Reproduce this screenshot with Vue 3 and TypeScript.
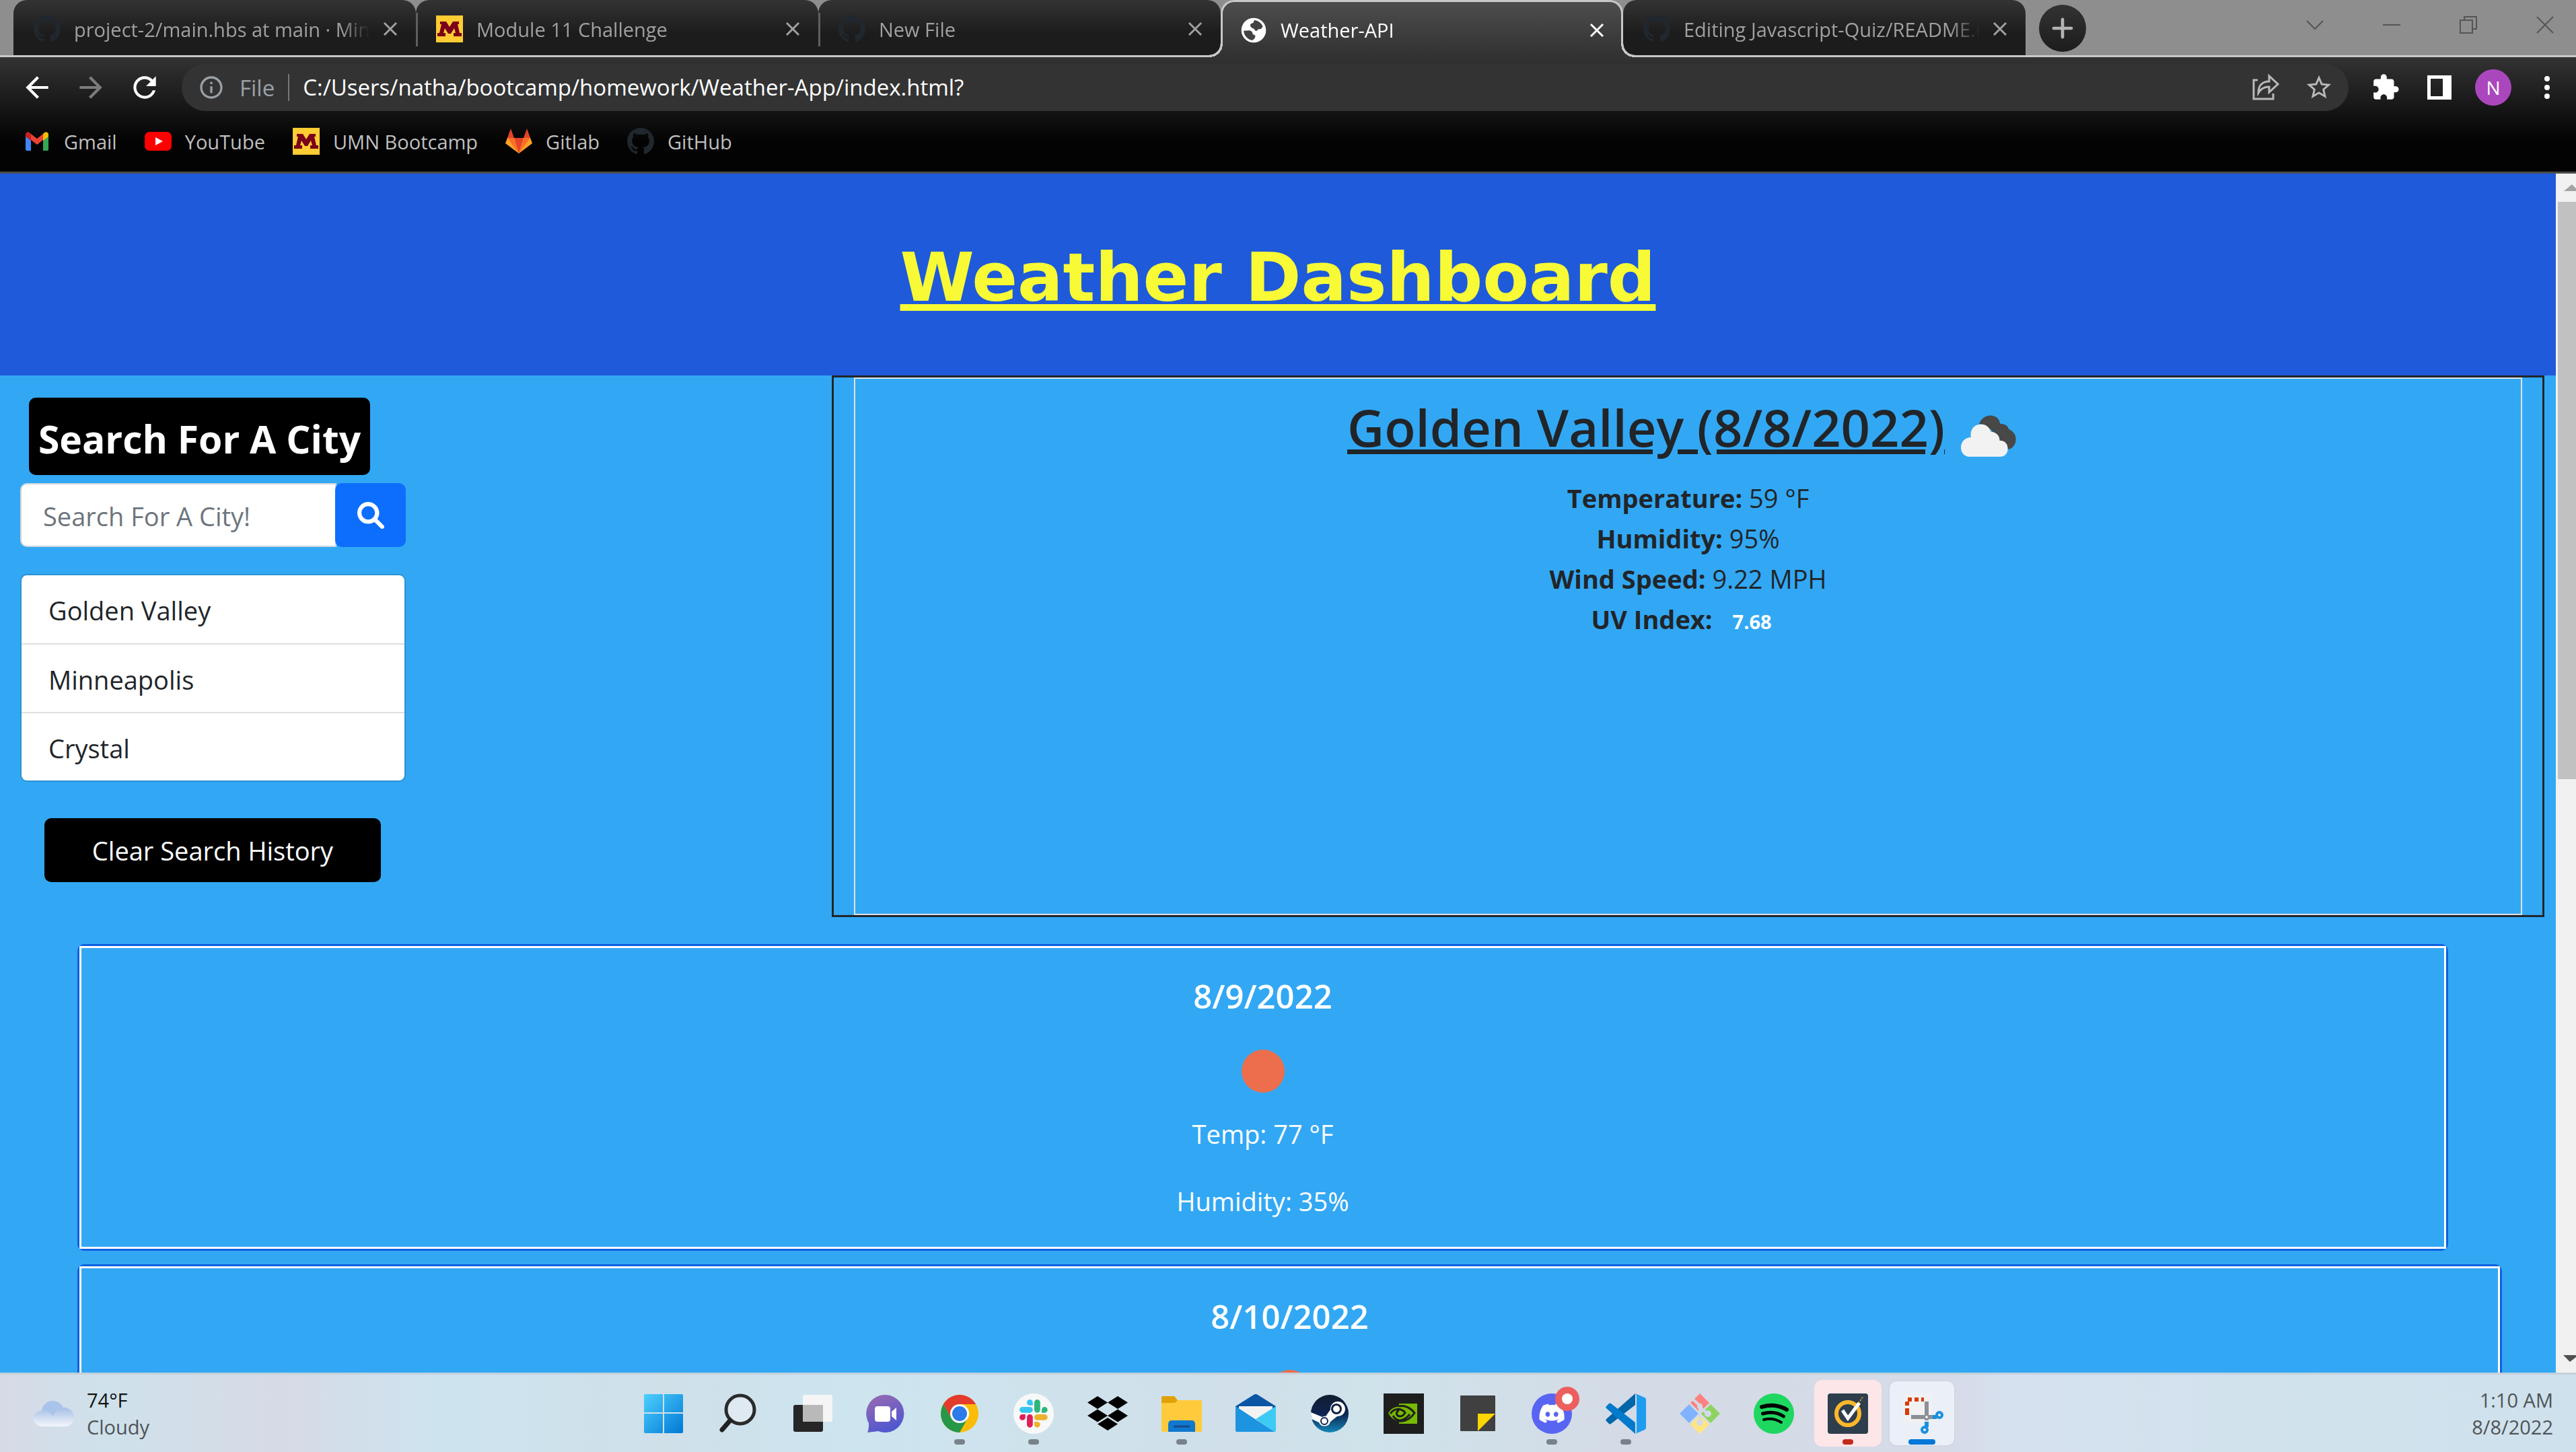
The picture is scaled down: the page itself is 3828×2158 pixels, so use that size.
<script setup lang="ts">
import { ref } from 'vue'

interface Tab {
  title: string
  icon: 'github' | 'umn' | 'globe'
  active?: boolean
}
interface TaskItem {
  name: string
  state?: 'open' | 'alert' | 'current'
}
interface Day {
  date: string
  details: string[]
}

const tabs: Tab[] = [
  { title: 'project-2/main.hbs at main · Minn', icon: 'github' },
  { title: 'Module 11 Challenge', icon: 'umn' },
  { title: 'New File', icon: 'github' },
  { title: 'Weather-API', icon: 'globe', active: true },
  { title: 'Editing Javascript-Quiz/README.m', icon: 'github' },
]

const bookmarks = ['Gmail', 'YouTube', 'UMN Bootcamp', 'Gitlab', 'GitHub']

const query = ref('')
const history = ref<string[]>(['Golden Valley', 'Minneapolis', 'Crystal'])

const current = [
  { label: 'Temperature:', value: '59 °F' },
  { label: 'Humidity:', value: '95%' },
  { label: 'Wind Speed:', value: '9.22 MPH' },
]

const forecast: Day[] = [
  { date: '8/9/2022', details: ['Temp: 77 °F', 'Humidity: 35%'] },
  { date: '8/10/2022', details: [] },
]

const tasks: TaskItem[] = [
  { name: 'start' },
  { name: 'search' },
  { name: 'taskview' },
  { name: 'chat' },
  { name: 'chrome', state: 'open' },
  { name: 'slack', state: 'open' },
  { name: 'dropbox' },
  { name: 'explorer', state: 'open' },
  { name: 'mail' },
  { name: 'steam' },
  { name: 'nvidia' },
  { name: 'notes' },
  { name: 'discord', state: 'open' },
  { name: 'vscode', state: 'open' },
  { name: 'git' },
  { name: 'spotify' },
  { name: 'norton', state: 'alert' },
  { name: 'snip', state: 'current' },
]

const octocat =
  'M8 0C3.58 0 0 3.58 0 8c0 3.54 2.29 6.53 5.47 7.59.4.07.55-.17.55-.38 0-.19-.01-.82-.01-1.49-2.01.37-2.53-.49-2.69-.94-.09-.23-.48-.94-.82-1.13-.28-.15-.68-.52-.01-.53.63-.01 1.08.58 1.23.82.72 1.21 1.87.87 2.33.66.07-.52.28-.87.51-1.07-1.78-.2-3.64-.89-3.64-3.95 0-.87.31-1.59.82-2.15-.08-.2-.36-1.02.08-2.12 0 0 .67-.21 2.2.82.64-.18 1.32-.27 2-.27.68 0 1.36.09 2 .27 1.53-1.04 2.2-.82 2.2-.82.44 1.1.16 1.92.08 2.12.51.56.82 1.27.82 2.15 0 3.07-1.87 3.75-3.65 3.95.29.25.54.73.54 1.48 0 1.07-.01 1.93-.01 2.2 0 .21.15.46.55.38A8.013 8.013 0 0016 8c0-4.42-3.58-8-8-8z'
const blockM =
  'M6 9h9l5 8 5-8h9v4h-2l3 13h3v5H26v-5h3l-2-7-5 8h-4l-5-8-2 7h3v5H2v-5h3l3-13H6z'
</script>

<template>
  <div class="screen">
    <div class="browser">
      <div class="strip">
        <div class="tabs">
          <div v-for="tab in tabs" :key="tab.title" class="tab" :class="{ active: tab.active }">
            <svg v-if="tab.icon === 'github'" class="fav" viewBox="0 0 16 16"><path :d="octocat" fill="#20272e" /></svg>
            <svg v-else-if="tab.icon === 'umn'" class="fav" viewBox="0 0 40 40">
              <rect width="40" height="40" fill="#ffcc33" /><path :d="blockM" fill="#7a0019" />
            </svg>
            <svg v-else class="fav" viewBox="0 0 24 24">
              <circle cx="12" cy="12" r="11" fill="#fff" />
              <path fill="#434343" d="M11 20.900a9 9 0 0 1-7.900-8.500L8 12.200c2 .2 3 1.400 3 2.600 0 1.200 1.800.8 2.400 2 .4 1-.6 1.600-.6 2.600zM9 7.500c0-1.500 1.600-1.500 2.600-2.200.6-.6.4-1.600 1-2.300 3.400.3 6.300 2.500 7.500 5.500l-1.300 2.200c-1.200.5-2.800 0-3.500 1.300-.5 1-2.300.6-2.500-.6-.2-1.500-3.800-.9-3.800-3.900z" />
            </svg>
            <span class="tab-title">{{ tab.title }}</span>
            <button class="tab-close" type="button" aria-label="Close tab">
              <svg viewBox="0 0 20 20"><path d="M1 1l18 18M19 1L1 19" stroke="currentColor" stroke-width="3" /></svg>
            </button>
          </div>
        </div>
        <button class="new-tab" type="button" aria-label="New tab">
          <svg viewBox="0 0 30 30"><path d="M15 1v28M1 15h28" stroke="#b4b4b4" stroke-width="5" stroke-linecap="round" /></svg>
        </button>
        <div class="window-buttons">
          <button type="button" aria-label="Search tabs"><svg viewBox="0 0 26 26"><path d="M1 7l12 12L25 7" /></svg></button>
          <button type="button" aria-label="Minimize"><svg viewBox="0 0 26 26"><path d="M0 13h26" /></svg></button>
          <button type="button" aria-label="Restore"><svg viewBox="0 0 26 26"><path d="M1 6h18v19H1zM7 6V1h18v18h-6" /></svg></button>
          <button type="button" aria-label="Close"><svg viewBox="0 0 26 26"><path d="M1 1l24 24M25 1L1 25" /></svg></button>
        </div>
      </div>

      <div class="toolbar">
        <button class="tool" type="button" aria-label="Back">
          <svg viewBox="0 0 24 24"><path fill="#fff" d="M20 11H7.830l5.590-5.590L12 4l-8 8 8 8 1.410-1.410L7.830 13H20v-2z" /></svg>
        </button>
        <button class="tool" type="button" aria-label="Forward">
          <svg viewBox="0 0 24 24"><path fill="#7c7c7c" d="M4 13h12.170l-5.590 5.590L12 20l8-8-8-8-1.410 1.410L16.170 11H4v2z" /></svg>
        </button>
        <button class="tool" type="button" aria-label="Reload">
          <svg viewBox="0 0 24 24"><path fill="#fff" d="M17.650 6.350C16.200 4.900 14.210 4 12 4c-4.420 0-7.990 3.580-7.990 8s3.570 8 7.990 8c3.730 0 6.840-2.550 7.730-6h-2.080c-.82 2.330-3.040 4-5.650 4-3.310 0-6-2.690-6-6s2.690-6 6-6c1.660 0 3.140.69 4.220 1.780L13 11h7V4l-2.350 2.350z" /></svg>
        </button>
        <div class="omnibox">
          <svg class="info" viewBox="0 0 24 24"><path fill="#9aa0a6" d="M11 7h2v2h-2zm0 4h2v6h-2zm1-9C6.480 2 2 6.480 2 12s4.480 10 10 10 10-4.480 10-10S17.520 2 12 2zm0 18c-4.410 0-8-3.590-8-8s3.590-8 8-8 8 3.590 8 8-3.590 8-8 8z" /></svg>
          <span class="scheme">File</span>
          <span class="url">C:/Users/natha/bootcamp/homework/Weather-App/index.html?</span>
          <svg class="omni-icon" viewBox="0 0 40 40">
            <path fill="none" stroke="#b9b9b9" stroke-width="3" d="M8 9H2v28h29v-8M9 28c0-11 6-17 16-17V3l13 12-13 12v-8c-7 0-12 2-16 9z" />
          </svg>
          <svg class="omni-icon" viewBox="1 1 22 22"><path fill="#b9b9b9" d="M22 9.240l-7.190-.62L12 2 9.190 8.630 2 9.240l5.460 4.730L5.820 21 12 17.270 18.180 21l-1.630-7.030L22 9.240zM12 15.400l-3.760 2.270 1-4.280-3.320-2.880 4.380-.38L12 6.100l1.710 4.040 4.380.38-3.320 2.880 1 4.280L12 15.400z" /></svg>
        </div>
        <button class="tool" type="button" aria-label="Extensions">
          <svg viewBox="-2 -2 28 28"><path fill="#fff" d="M20.500 11H19V7c0-1.100-.9-2-2-2h-4V3.500C13 2.120 11.880 1 10.500 1S8 2.120 8 3.500V5H4c-1.100 0-1.990.9-1.990 2v3.800H3.500c1.490 0 2.700 1.210 2.700 2.700s-1.210 2.700-2.700 2.700H2V20c0 1.100.9 2 2 2h3.800v-1.500c0-1.490 1.210-2.700 2.700-2.700 1.490 0 2.700 1.210 2.700 2.700V22H17c1.100 0 2-.9 2-2v-4h1.500c1.380 0 2.500-1.120 2.500-2.500S21.880 11 20.500 11z" /></svg>
        </button>
        <button class="tool" type="button" aria-label="Side panel">
          <svg viewBox="0 0 50 50"><path fill="#fff" fill-rule="evenodd" d="M7 7h36v36H7zm5 5v26h18V12z" /></svg>
        </button>
        <button class="tool avatar" type="button">N</button>
        <button class="tool" type="button" aria-label="Menu">
          <svg viewBox="0 0 50 50"><g fill="#fff"><circle cx="25" cy="12" r="4" /><circle cx="25" cy="25" r="4" /><circle cx="25" cy="38" r="4" /></g></svg>
        </button>
      </div>

      <nav class="bookmarks">
        <a v-for="mark in bookmarks" :key="mark" href="#">
          <svg v-if="mark === 'Gmail'" viewBox="0 0 40 40">
            <path d="M3 34V12l8 6v16H5a2 2 0 0 1-2-2z" fill="#4285f4" /><path d="M37 34V12l-8 6v16h6a2 2 0 0 0 2-2z" fill="#34a853" />
            <path d="M11 18v-9l9 7 9-7v9l-9 7z" fill="#ea4335" /><path d="M3 10v3l8 6V9L9 7c-3-2-6 0-6 3z" fill="#c5221f" /><path d="M37 10v3l-8 6V9l2-2c3-2 6 0 6 3z" fill="#fbbc04" />
          </svg>
          <svg v-else-if="mark === 'YouTube'" viewBox="0 0 40 40"><rect y="6" width="40" height="28" rx="7" fill="#f00" /><path d="M16 14l11 6-11 6z" fill="#fff" /></svg>
          <svg v-else-if="mark === 'UMN Bootcamp'" viewBox="0 0 40 40"><rect width="40" height="40" fill="#ffcc33" /><path :d="blockM" fill="#7a0019" /></svg>
          <svg v-else-if="mark === 'Gitlab'" viewBox="0 0 40 40">
            <path d="M20 38L0 23l3-8h34l3 8z" fill="#fca326" /><path d="M3 15L8 1l5 14zM37 15L32 1l-5 14zM13 15h14l-7 23z" fill="#e24329" /><path d="M3 15h10l7 23zM37 15H27l-7 23z" fill="#fc6d26" />
          </svg>
          <svg v-else viewBox="0 0 16 16"><path :d="octocat" fill="#20272e" /></svg>
          <span>{{ mark }}</span>
        </a>
      </nav>
    </div>

    <div class="viewport">
      <div class="page">
        <header class="hero"><h1>Weather Dashboard</h1></header>

        <div class="columns">
          <aside class="side">
            <h3 class="side-title"><label for="city">Search For A City</label></h3>
            <form class="search" @submit.prevent>
              <input id="city" v-model="query" type="text" placeholder="Search For A City!" />
              <button type="submit" aria-label="Search">
                <svg viewBox="0 0 512 512"><path fill="#fff" d="M500.300 443.700l-119.700-119.700c27.220-40.410 40.650-90.900 33.460-144.700C401.800 87.790 326.800 13.320 235.200 1.723C99.010-15.510-15.510 99.010 1.724 235.200c11.600 91.640 86.080 166.700 177.600 178.900c53.800 7.189 104.300-6.236 144.700-33.460l119.700 119.700c15.620 15.620 40.950 15.620 56.570 0C515.900 484.700 515.900 459.300 500.300 443.700zM79.100 208c0-70.580 57.420-128 128-128s128 57.420 128 128c0 70.580-57.420 128-128 128S79.100 278.600 79.100 208z" /></svg>
              </button>
            </form>
            <ul class="history">
              <li v-for="city in history" :key="city">{{ city }}</li>
            </ul>
            <button class="clear" type="button" @click="history = []">Clear Search History</button>
          </aside>

          <section class="current">
            <div class="current-inner">
              <div class="current-head">
                <h2>Golden Valley (8/8/2022)</h2>
                <svg class="cloud" viewBox="0 0 125 125">
                  <path fill="#484849" d="M50 46c4-10 14-16 24-12 6 2 9 7 10 12 7 0 12 3 14 9 7 3 11 9 11 16 0 8-5 14-11 16L80 76 70 56z" />
                  <path fill="#f2f2f2" d="M36 99c-10 0-15-7-15-15 0-9 7-16 16-16-2-12 5-21 16-21 8 0 14 5 16 12 8 0 14 6 14 14 8 0 13 5 13 13 0 8-5 13-12 13z" />
                </svg>
              </div>
              <p v-for="row in current" :key="row.label"><strong>{{ row.label }}</strong> {{ row.value }}</p>
              <p><strong>UV Index:</strong> <span class="badge">7.68</span></p>
            </div>
          </section>
        </div>

        <section class="forecast">
          <article v-for="day in forecast" :key="day.date" class="card">
            <div class="card-body">
              <h5>{{ day.date }}</h5>
              <svg class="sun" viewBox="0 0 125 125"><circle cx="63" cy="62" r="32" fill="#ec6e4c" /></svg>
              <p v-for="line in day.details" :key="line">{{ line }}</p>
            </div>
          </article>
        </section>
      </div>

      <div class="scrollbar">
        <svg viewBox="0 0 30 42"><path d="M12 26h18v-4l-6-6z" fill="#a3a3a3" /></svg>
        <div class="thumb"></div>
        <svg viewBox="0 0 30 42"><path d="M11 16h19v3l-9 7z" fill="#505050" /></svg>
      </div>
    </div>

    <footer class="taskbar">
      <div class="weather">
        <svg viewBox="0 0 60 60">
          <defs>
            <linearGradient id="wc" x1="0" y1="0" x2="0" y2="1"><stop offset="0" stop-color="#a4bfe6" /><stop offset="1" stop-color="#f4f6fb" /></linearGradient>
          </defs>
          <path fill="#aac3ea" d="M12 26c1-9 8-15 16-15s15 5 17 13L34 44z" />
          <path fill="url(#wc)" d="M14 49C5 49 0 43 0 37s6-12 14-12c7 0 12 4 15 9 3-7 9-13 16-13 9 0 15 7 15 14s-5 14-13 14z" />
        </svg>
        <div><span class="deg">74°F</span><span>Cloudy</span></div>
      </div>

      <div class="tasks">
        <button v-for="t in tasks" :key="t.name" type="button" class="task" :class="t.state" :aria-label="t.name">
          <svg viewBox="0 0 60 60">
            <template v-if="t.name === 'start'">
              <defs><linearGradient id="win" x1="0" y1="0" x2="1" y2="1"><stop offset="0" stop-color="#4dd0ff" /><stop offset="1" stop-color="#0078d4" /></linearGradient></defs>
              <path fill="url(#win)" d="M3 1h26v27H1V3a2 2 0 0 1 2-2zM31 1h26a2 2 0 0 1 2 2v25H31zM1 30h28v29H3a2 2 0 0 1-2-2zM31 30h28v27a2 2 0 0 1-2 2H31z" />
            </template>
            <template v-else-if="t.name === 'search'">
              <circle cx="34" cy="24" r="21" fill="#dfe9f2" stroke="#2b2b2b" stroke-width="5" /><path d="M19 40L7 54" stroke="#222" stroke-width="7" stroke-linecap="round" />
            </template>
            <template v-else-if="t.name === 'taskview'">
              <rect x="3" y="17" width="44" height="40" rx="3" fill="#262626" /><rect x="17" y="2" width="44" height="40" rx="3" fill="#f5f5f5" /><rect x="17" y="17" width="30" height="25" fill="#b9b9b9" />
            </template>
            <template v-else-if="t.name === 'chat'">
              <defs><linearGradient id="chat" x1="0" y1="0" x2=".4" y2="1"><stop offset="0" stop-color="#9d6bb0" /><stop offset="1" stop-color="#5158cf" /></linearGradient></defs>
              <path fill="url(#chat)" d="M30 2a28 28 0 1 1-11 54L3 58c2-4 2-8 2-14A28 28 0 0 1 30 2z" /><rect x="14" y="19" width="23" height="23" rx="4" fill="#fff" /><path d="M39 27l7-6v19l-7-6z" fill="#fff" />
            </template>
            <template v-else-if="t.name === 'chrome'">
              <circle cx="30" cy="30" r="28" fill="#fbbc09" /><path fill="#e33b2e" d="M5.800 16A28 28 0 0 1 54.200 16H30L18 37z" /><path fill="#279847" d="M5.800 16A28 28 0 0 0 30 58l12-21-12 7-12-7z" />
              <circle cx="30" cy="30" r="14" fill="#fff" /><circle cx="30" cy="30" r="11" fill="#2c7be8" />
            </template>
            <template v-else-if="t.name === 'slack'">
              <circle cx="30" cy="30" r="30" fill="#f8f8f8" />
              <g transform="translate(9 9) scale(.34)">
                <path fill="#e01e5a" d="M25.800 77.600c0 7.100-5.800 12.900-12.900 12.900S0 84.700 0 77.600s5.800-12.900 12.900-12.900h12.900v12.900zm6.500 0c0-7.100 5.800-12.900 12.900-12.900s12.900 5.800 12.900 12.900v32.300c0 7.100-5.800 12.900-12.900 12.900s-12.900-5.800-12.900-12.900V77.600z" />
                <path fill="#36c5f0" d="M45.200 25.800c-7.100 0-12.900-5.800-12.900-12.900S38.100 0 45.200 0s12.900 5.800 12.900 12.900v12.900H45.200zm0 6.500c7.100 0 12.900 5.800 12.900 12.900s-5.800 12.900-12.900 12.900H12.900C5.800 58.100 0 52.300 0 45.200s5.800-12.900 12.900-12.900h32.300z" />
                <path fill="#2eb67d" d="M97 45.200c0-7.100 5.800-12.900 12.900-12.900s12.900 5.800 12.900 12.900-5.800 12.900-12.900 12.900H97V45.200zm-6.500 0c0 7.100-5.800 12.900-12.900 12.900s-12.900-5.800-12.900-12.900V12.900C64.700 5.800 70.500 0 77.600 0s12.900 5.800 12.900 12.900v32.300z" />
                <path fill="#ecb22e" d="M77.600 97c7.100 0 12.900 5.800 12.900 12.900s-5.800 12.900-12.900 12.900-12.900-5.800-12.900-12.900V97h12.900zm0-6.500c-7.100 0-12.900-5.800-12.900-12.900s5.800-12.900 12.900-12.900h32.300c7.100 0 12.900 5.800 12.900 12.900s-5.800 12.900-12.900 12.900H77.600z" />
              </g>
            </template>
            <path v-else-if="t.name === 'dropbox'" d="M15 4L0 13.500 15 23l15-9.500zM45 4L30 13.500 45 23l15-9.500zM0 33l15 9.500L30 33l-15-9.500zM45 23.500L30 33l15 9.500L60 33zM15 45.500L30 55l15-9.500L30 36z" />
            <template v-else-if="t.name === 'explorer'">
              <path d="M0 6a2 2 0 0 1 2-2h17l5 6v10H0z" fill="#e0a106" /><path d="M0 14h20l4-4h34a2 2 0 0 1 2 2v43a2 2 0 0 1-2 2H2a2 2 0 0 1-2-2z" fill="#ffcb3c" />
              <path d="M10 57V45a5 5 0 0 1 5-5h30a5 5 0 0 1 5 5v12z" fill="#0f78cf" /><path d="M18 49h24" stroke="#164a8a" stroke-width="3" />
            </template>
            <template v-else-if="t.name === 'mail'">
              <path d="M0 19L27 2q3-2 6 0l27 17v10H0z" fill="#0b55a5" /><path d="M5 19h50v12L30 42 5 31z" fill="#f3f3f3" />
              <path d="M60 19v36a2 2 0 0 1-2 2L30 38z" fill="#3dcaf5" /><path d="M0 19l58 38H2a2 2 0 0 1-2-2z" fill="#1c94e0" />
            </template>
            <template v-else-if="t.name === 'steam'">
              <defs><linearGradient id="steam" x1="0" y1="0" x2="0" y2="1"><stop offset="0" stop-color="#111d2e" /><stop offset=".5" stop-color="#0f2350" /><stop offset="1" stop-color="#1387b8" /></linearGradient></defs>
              <circle cx="30" cy="30" r="28" fill="url(#steam)" />
              <path d="M2 28l17 7q3-2 5-1l7-10a11 11 0 1 1 10 10l-10 8a9 9 0 0 1-17 1L3 38q-1-5-1-10z" fill="#fff" />
              <circle cx="40" cy="23" r="8" fill="#14224a" /><circle cx="40" cy="23" r="5" fill="#fff" /><circle cx="22" cy="41" r="5" fill="#fff" stroke="#14224a" stroke-width="2" />
            </template>
            <template v-else-if="t.name === 'nvidia'">
              <rect width="60" height="60" fill="#1e1e1e" /><path d="M23 15h27v30H23z" fill="#76b900" />
              <path d="M7 29c6-10 17-13 28-4 3 3 5 5 5 5-9 13-25 15-33-1z" fill="#76b900" />
              <path d="M10 30c6-8 14-9 22-2 M14 33c5 9 15 10 25-2 M23 25c-5 2-5 9 2 9 4 0 6-4 8-6M23 19c9-2 18 3 23 10-6 9-14 13-23 12" fill="none" stroke="#1e1e1e" stroke-width="3" />
            </template>
            <template v-else-if="t.name === 'notes'">
              <rect x="4" y="3" width="52" height="53" rx="1" fill="#404040" /><path d="M30 30h26L30 56z" fill="#ffd500" />
            </template>
            <template v-else-if="t.name === 'discord'">
              <circle cx="30" cy="30" r="30" fill="#5865f2" />
              <path transform="translate(11.500 11) scale(1.550)" fill="#fff" d="M20.317 4.370a19.790 19.790 0 00-4.885-1.515.074.074 0 00-.079.037c-.211.375-.445.865-.608 1.250-1.845-.276-3.680-.276-5.487 0-.164-.393-.406-.874-.618-1.250a.077.077 0 00-.079-.037 19.736 19.736 0 00-4.885 1.515.07.07 0 00-.032.028C.533 9.046-.319 13.580.099 18.058a.082.082 0 00.031.056c2.053 1.508 4.041 2.423 5.993 3.029a.078.078 0 00.084-.028c.462-.630.873-1.295 1.226-1.994a.076.076 0 00-.042-.106c-.653-.248-1.274-.550-1.872-.892a.077.077 0 01-.008-.128c.126-.094.252-.192.372-.291a.074.074 0 01.078-.011c3.928 1.793 8.180 1.793 12.061 0a.074.074 0 01.079.010c.120.099.246.198.373.292a.077.077 0 01-.007.128 12.299 12.299 0 01-1.873.891.077.077 0 00-.041.107c.360.698.772 1.363 1.225 1.993a.076.076 0 00.084.029c1.961-.607 3.950-1.522 6.002-3.029a.077.077 0 00.031-.055c.500-5.177-.838-9.674-3.549-13.660a.061.061 0 00-.031-.029zM8.020 15.331c-1.183 0-2.157-1.086-2.157-2.419s.956-2.419 2.157-2.419c1.211 0 2.176 1.095 2.157 2.419 0 1.333-.956 2.419-2.157 2.419zm7.975 0c-1.183 0-2.157-1.086-2.157-2.419s.955-2.419 2.157-2.419c1.211 0 2.176 1.095 2.157 2.419 0 1.333-.946 2.419-2.157 2.419z" />
              <circle cx="53" cy="8" r="18" fill="#ed5f5f" /><circle cx="53" cy="8" r="8" fill="#fff" />
            </template>
            <template v-else-if="t.name === 'vscode'">
              <path d="M44 0v17L8 45q-1.500 1-3 0l-4-4q-1.500-1.500 0-3z" fill="#0065a9" /><path d="M44 60V43L8 15q-1.500-1-3 0l-4 4q-1.500 1.500 0 3z" fill="#007acc" /><path d="M44 0l14 6q2 1 2 3v42q0 2-2 3l-14 6q2-1 2-4V4q0-3-2-4z" fill="#1f9cf0" />
            </template>
            <template v-else-if="t.name === 'git'">
              <path d="M30 0l14 14-14 14-14-14z" fill="#ff8080" /><path d="M14 16l14 14-14 14L0 30z" fill="#80b3ff" /><path d="M46 16l14 14-14 14-14-14z" fill="#8dd35f" /><path d="M30 32l14 14-14 14-14-14z" fill="#ffe680" />
              <path d="M20 9l10 9v25M30 20l11 10" fill="none" stroke="#d3dae6" stroke-width="4" /><circle cx="30" cy="19" r="4" fill="#d3dae6" /><circle cx="42" cy="30" r="5" fill="#d3dae6" /><circle cx="30" cy="43" r="5" fill="#d3dae6" />
            </template>
            <template v-else-if="t.name === 'spotify'">
              <circle cx="30" cy="30" r="30" fill="#1ed760" />
              <g fill="none" stroke="#000" stroke-linecap="round"><path d="M12 20q20-6 37 4" stroke-width="6" /><path d="M13.500 30q17-5 31 4" stroke-width="5" /><path d="M15 39q14-4 26 4" stroke-width="4" /></g>
            </template>
            <template v-else-if="t.name === 'norton'">
              <rect width="60" height="60" rx="4" fill="#2f3e4d" /><circle cx="30" cy="30" r="17" fill="none" stroke="#fdb82b" stroke-width="6" /><path d="M22 25l8 12L47 14" fill="none" stroke="#fff" stroke-width="5" /><path d="M46 14l7-10" stroke="#e8a52b" stroke-width="2" stroke-dasharray="2 2" />
            </template>
            <template v-else>
              <rect x="2" y="0" width="44" height="44" rx="4" fill="#f1f1f3" />
              <path d="M8 28V9h25" fill="none" stroke="#d83b01" stroke-width="6" stroke-dasharray="6 4" /><path d="M8 26v6" stroke="#d83b01" stroke-width="6" />
              <path d="M37 12v28M14 35h34" stroke="#8a9096" stroke-width="6" /><circle cx="37" cy="35" r="2" fill="#eee" />
              <path d="M37 42v8M46 35h6" stroke="#1a90dd" stroke-width="6" /><circle cx="34" cy="54" r="4" fill="none" stroke="#1a90dd" stroke-width="4" /><circle cx="56" cy="32" r="4" fill="none" stroke="#1a90dd" stroke-width="4" />
            </template>
          </svg>
        </button>
      </div>

      <div class="clock"><span>1:10 AM</span><span>8/8/2022</span></div>
    </footer>
  </div>
</template>

<style>
body {
  overflow: hidden;
}
</style>

<style scoped>
.screen {
  height: 100vh;
  display: flex;
  flex-direction: column;
  font-family: "Open Sans", "Noto Sans", sans-serif;
  font-size: 38px;
  color: #212529;
}
.screen * {
  box-sizing: border-box;
}
svg {
  display: block;
  overflow: visible;
}
button {
  font: inherit;
  color: inherit;
  border: 0;
  padding: 0;
  background: none;
}
h1,
h2,
h3,
h5,
p,
ul {
  margin: 0;
  padding: 0;
}

/* browser frame */
.browser {
  background: linear-gradient(#333 85px, #030303 210px);
  border-bottom: 3px solid #4d4d4d;
}
.strip {
  display: flex;
  height: 85px;
  padding-left: 20px;
  background: linear-gradient(#c8c8c8, #c8c8c8) bottom / 100% 3px no-repeat, #8e8e8e;
}
.tabs {
  display: flex;
}
.tab {
  position: relative;
  display: flex;
  align-items: center;
  width: 598px;
  height: 82px;
  padding: 4px 28px 0 30px;
  gap: 20px;
  border-radius: 20px 20px 0 0;
  background: linear-gradient(#333, #1c1c1c 50px);
  color: #a0a0a0;
  font-size: 29px;
}
.tab:first-child {
  box-shadow: -6px 20px 0 -6px #1c1c1c;
  clip-path: inset(0 0 0 -8px);
}
.tab:nth-child(2)::before,
.tab:nth-child(3)::before {
  content: "";
  position: absolute;
  left: 0;
  top: 19px;
  width: 3px;
  height: 50px;
  background: #5f5f5f;
}
.tab.active {
  z-index: 1;
  height: 85px;
  padding: 1px 26px 0 26px;
  border: 3px solid #c8c8c8;
  border-bottom: 0;
  background: linear-gradient(#4d4d4d, #313131);
  color: #fff;
}
.tab.active::before,
.tab.active::after {
  content: "";
  position: absolute;
  bottom: 0;
  width: 20px;
  height: 20px;
}
.tab.active::before {
  left: -20px;
  background: radial-gradient(circle at 0 0, transparent 16px, #c8c8c8 17px 20px, #333 20px);
}
.tab.active::after {
  right: -20px;
  background: radial-gradient(circle at 100% 0, transparent 16px, #c8c8c8 17px 20px, #333 20px);
}
.fav {
  width: 40px;
  height: 40px;
}
.tab-title {
  flex: 1;
  min-width: 0;
  overflow: hidden;
  white-space: nowrap;
  mask-image: linear-gradient(to right, #000 90%, transparent);
}
.tab-close svg {
  width: 20px;
  height: 20px;
}
.new-tab {
  display: grid;
  place-items: center;
  width: 70px;
  height: 70px;
  margin: 7px 0 0 20px;
  border-radius: 50%;
  background: linear-gradient(#333, #1c1c1c);
}
.new-tab svg {
  width: 28px;
  height: 28px;
}
.window-buttons {
  display: flex;
  gap: 88px;
  height: 74px;
  margin-left: auto;
  padding-right: 33px;
  align-items: center;
}
.window-buttons svg {
  width: 26px;
  height: 26px;
  fill: none;
  stroke: #555;
  stroke-width: 2;
}
.toolbar {
  display: flex;
  align-items: center;
  gap: 30px;
  height: 90px;
  padding: 0 18px 0 30px;
}
.tool {
  flex: none;
  width: 50px;
  height: 50px;
}
.avatar {
  width: 54px;
  height: 54px;
  margin: 0 -2px;
  border-radius: 50%;
  background: #ab47bc;
  color: #fff;
  font-size: 28px;
}
.omnibox {
  flex: 1;
  display: flex;
  align-items: center;
  height: 70px;
  padding: 0 24px;
  border-radius: 35px;
  background: #333;
  font-size: 33px;
}
.info {
  width: 40px;
  height: 40px;
}
.scheme {
  margin: 0 20px 0 22px;
  color: #9aa0a6;
}
.url {
  flex: 1;
  padding-left: 20px;
  border-left: 2px solid #777;
  line-height: 40px;
  color: #fff;
}
.omni-icon {
  width: 40px;
  height: 40px;
  margin-left: 39px;
}
.bookmarks {
  display: flex;
  gap: 41px;
  height: 80px;
  padding: 0 35px 10px;
}
.bookmarks a {
  display: flex;
  align-items: center;
  gap: 20px;
  color: #bfbfbf;
  font-size: 29px;
  text-decoration: none;
}
.bookmarks svg {
  width: 40px;
  height: 40px;
}

/* web page */
.viewport {
  flex: 1;
  display: flex;
  min-height: 0;
  overflow: hidden;
  background: #32a8f4;
}
.page {
  flex: 1;
}
.hero {
  padding: 95px 0 85px;
  background: #1e5ada;
  text-align: center;
}
h1 {
  font: bold 100px/120px "DejaVu Sans", Verdana, sans-serif;
  color: #f8fa36;
  text-decoration: underline;
}
.columns {
  display: grid;
  grid-template-columns: 17fr 35fr;
  padding-right: 17px;
}
.side {
  width: 603px;
  padding: 33px 0 0 30px;
}
.side-title {
  width: 507px;
  height: 115px;
  margin: 0 0 12px 13px;
  padding-top: 8px;
  border-radius: 10px;
  background: #000;
  color: #fff;
  font-size: 57px;
  font-weight: 700;
  line-height: 107px;
  text-align: center;
  white-space: nowrap;
}
.search {
  display: flex;
  height: 95px;
}
.search input {
  flex: 1;
  min-width: 0;
  padding: 2px 32px 0;
  border: 2px solid #ced4da;
  border-radius: 10px 0 0 10px;
  font: inherit;
}
.search input::placeholder {
  color: #6c757d;
  opacity: 1;
}
.search button {
  display: grid;
  place-items: center;
  width: 105px;
  margin-left: -2px;
  border-radius: 10px;
  background: #0d6efd;
}
.search button svg {
  width: 40px;
  height: 40px;
}
.history {
  margin-top: 40px;
  border: 2px solid #2b92d3;
  border-radius: 10px;
  background: #fff;
  list-style: none;
}
.history li {
  padding: 22px 40px 19px;
  line-height: 60px;
}
.history li + li {
  border-top: 2px solid #dfdfdf;
  padding-bottom: 18px;
}
.clear {
  width: 500px;
  height: 95px;
  margin: 54px 0 0 36px;
  border-radius: 10px;
  background: #000;
  color: #fff;
}
.current {
  min-height: 805px;
  display: flex;
  padding: 0 30px;
  border: 3px solid #212529;
}
.current-inner {
  flex: 1;
  padding-top: 24px;
  border: 2px solid #dee2e6;
  text-align: center;
  line-height: 60px;
}
.current-head {
  display: flex;
  justify-content: center;
  height: 123px;
}
h2 {
  font-size: 76px;
  font-weight: 600;
  line-height: 96px;
  text-decoration: underline;
}
.cloud {
  width: 125px;
  height: 116px;
}
.badge {
  padding: 0 20px;
  color: #fff;
  font-size: 29px;
  font-weight: 700;
}
.forecast {
  display: flex;
  flex-direction: column;
  gap: 20px;
  padding: 40px 80px 0 115px;
}
.card {
  border: 3px solid #0d60e0;
  border-radius: 10px;
}
.card:first-child {
  margin-right: 80px;
}
.card-body {
  padding: 41px 0 38px;
  border: 3px solid #fff;
  color: #fff;
  text-align: center;
  line-height: 60px;
}
h5 {
  font-size: 49px;
  font-weight: 600;
}
.sun {
  width: 125px;
  height: 125px;
  margin: 20px auto 0;
}
.card p + p {
  margin-top: 40px;
}
.scrollbar {
  flex: none;
  display: flex;
  flex-direction: column;
  width: 30px;
  background: #f1f1f1;
}
.scrollbar svg {
  width: 30px;
  height: 42px;
}
.thumb {
  height: 858px;
  margin: 0 0 auto 3px;
  background: #c1c1c1;
}

/* taskbar */
.taskbar {
  display: grid;
  grid-template-columns: 1fr auto 1fr;
  align-items: center;
  height: 118px;
  border-top: 3px solid #c4d1dc;
  background: linear-gradient(90deg, #d6dae6, #cfe1eb 4%, #d6dae6 11%, #cde4ef 17%, #cfe0e9 26%, #cde5ef 33%, #d0dfe9 48%, #cfe3eb 53%, #d4dae6 64%, #d6dbe8 76%, #d6e1ef 78%, #d0e2ec 90%, #cfe1ec);
  color: #4f5458;
  font-size: 29px;
  line-height: 40px;
}
.weather {
  display: flex;
  align-items: center;
  gap: 19px;
  padding-left: 50px;
}
.weather svg {
  width: 60px;
  height: 60px;
}
.weather span,
.clock span {
  display: block;
}
.deg {
  color: #111;
}
.tasks {
  display: flex;
  gap: 10px;
  padding-left: 14px;
}
.task {
  position: relative;
  display: grid;
  place-items: center;
  width: 100px;
  height: 99px;
  border-radius: 12px;
}
.task svg {
  width: 60px;
  height: 60px;
}
.task.open::after,
.task.alert::after,
.task.current::after {
  content: "";
  position: absolute;
  bottom: 3px;
  left: 50%;
  width: 16px;
  height: 8px;
  margin-left: -8px;
  border-radius: 4px;
  background: #78828a;
}
.task.alert {
  background: #fde6e8;
}
.task.alert::after {
  background: #c42b1c;
}
.task.current {
  background: #eaeff8;
  min-height: 0;
  padding: 0;
  border: 2px solid #d0d7e4;
}
.task.current::after {
  bottom: 1px;
  width: 40px;
  margin-left: -20px;
  background: #0078d7;
}
.clock {
  padding-right: 34px;
  text-align: right;
}
</style>
